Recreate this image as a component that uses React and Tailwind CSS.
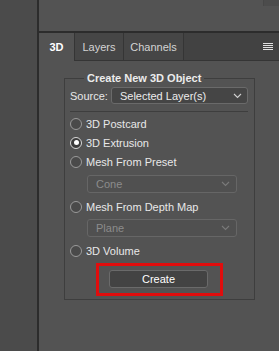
import React from 'react';

function Chevron({ color = '#d0d0d0' }) {
  return (
    <svg width="9" height="6" viewBox="0 0 9 6" className="shrink-0">
      <path d="M1 1 L4.5 4.5 L8 1" fill="none" stroke={color} strokeWidth="1.1" />
    </svg>
  );
}

function Radio({ label, checked }) {
  return (
    <div className="flex h-[19px] items-center gap-[4px] pl-[5px]">
      <span
        className={
          'flex h-[12px] w-[12px] items-center justify-center rounded-full border ' +
          (checked ? 'border-[#d8d8d8] bg-[#3c3c3c]' : 'border-[#9a9a9a] bg-[#4a4a4a]')
        }
      >
        {checked && <span className="h-[5px] w-[5px] rounded-full bg-white" />}
      </span>
      <span className="text-[#e8e8e8]">{label}</span>
    </div>
  );
}

function DisabledSelect({ value }) {
  return (
    <div className="ml-[22px] flex h-[18px] w-[150px] items-center justify-between rounded-[3px] border border-[#666666] bg-[#505050] pl-[8px] pr-[6px] text-[#8c8c8c]">
      <span>{value}</span>
      <Chevron color="#7a7a7a" />
    </div>
  );
}

export default function App() {
  return (
    <div
      className="flex h-[351px] w-[279px] overflow-hidden bg-[#535353] text-[11px] leading-[14px]"
      style={{ fontFamily: '"Liberation Sans", Arial, sans-serif' }}
    >
      <div className="w-[37px] shrink-0 bg-[#4b4b4b]" />
      <div className="w-[2px] shrink-0 bg-[#2c2c2c]" />
      <div className="flex flex-1 flex-col">
        <div className="flex h-[31px] justify-end bg-[#535353]">
          <div className="h-[6px] w-[16px] border-l border-[#474747] bg-[#4c4c4c]" />
        </div>
        <div className="h-[2px] bg-[#2c2c2c]" />
        <div className="flex h-[28px] bg-[#424242]">
          <div className="flex w-[35px] items-center justify-center bg-[#535353] font-bold text-white">3D</div>
          <div className="flex w-[49px] items-center justify-center border-b border-l border-[#353535] bg-[#464646] text-[#d4d4d4]">
            Layers
          </div>
          <div className="flex w-[61px] items-center justify-center border-b border-l border-r border-[#353535] bg-[#464646] text-[#d4d4d4]">
            Channels
          </div>
          <div className="flex flex-1 items-center justify-end border-b border-[#353535] pr-[6px]">
            <div className="flex w-[10px] flex-col gap-[1px]">
              <div className="h-[1px] bg-[#e0e0e0]" />
              <div className="h-[1px] bg-[#e0e0e0]" />
              <div className="h-[1px] bg-[#e0e0e0]" />
              <div className="h-[1px] bg-[#e0e0e0]" />
            </div>
          </div>
        </div>
        <div className="flex-1 pl-[25px] pt-[10px]">
          <fieldset className="w-[191px] border border-[#3e3e3e] pb-[3px] pl-[5px] pr-[6px]">
            <legend className="ml-[14px] px-[3px] font-bold text-[#ececec]">Create New 3D Object</legend>
            <div className="mt-[2px] flex items-center gap-[3px]">
              <span className="text-[#e8e8e8]">Source:</span>
              <div className="flex h-[17px] flex-1 items-center justify-between rounded-[3px] border border-[#6a6a6a] bg-[#454545] pl-[8px] pr-[5px] text-[#ececec]">
                <span>Selected Layer(s)</span>
                <Chevron />
              </div>
            </div>
            <div className="mt-[7px] mb-[2px] h-[1px] bg-[#3e3e3e]" />
            <div className="-ml-[5px]">
              <Radio label="3D Postcard" />
              <Radio label="3D Extrusion" checked />
              <Radio label="Mesh From Preset" />
              <div className="mt-[4px] mb-[4px]">
                <DisabledSelect value="Cone" />
              </div>
              <Radio label="Mesh From Depth Map" />
              <div className="mt-[3px] mb-[4px]">
                <DisabledSelect value="Plane" />
              </div>
              <Radio label="3D Volume" />
              <div className="mt-[3px] ml-[31px] w-[127px] border-[3px] border-[#e00d0d] pb-[5px] pl-[10px] pr-[12px] pt-[4px]">
                <button className="flex h-[18px] w-[99px] items-center justify-center rounded-[3px] border border-[#6a6a6a] bg-[#434343] text-white">
                  Create
                </button>
              </div>
            </div>
          </fieldset>
        </div>
      </div>
    </div>
  );
}
